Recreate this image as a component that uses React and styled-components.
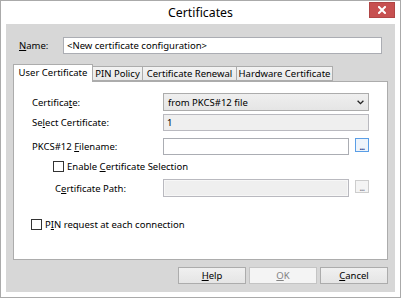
import React from 'react';
import styled, { createGlobalStyle } from 'styled-components';

const Global = createGlobalStyle`
  html, body { margin: 0; padding: 0; background: #fff; }
  body {
    font-family: "Noto Sans", "Segoe UI", sans-serif;
    font-size: 9.5px;
    color: #000;
  }
  * { box-sizing: border-box; }
`;

const Window = styled.div`
  width: 401px;
  height: 298px;
  border: 1px solid #aaaaaa;
  background: #fff;
  display: flex;
  flex-direction: column;
`;

const TitleBar = styled.div`
  height: 23px;
  display: grid;
  grid-template-columns: 1fr auto 1fr;
`;

const Title = styled.div`
  grid-column: 2;
  font-size: 12.3px;
  line-height: 23px;
  color: #000;
`;

const CloseButton = styled.div`
  grid-column: 3;
  justify-self: end;
  margin: 1px 5px 0 0;
  width: 26px;
  height: 16px;
  background: #c75050;
  border: 1px solid #b04545;
  display: flex;
  align-items: center;
  justify-content: center;
`;

const Client = styled.div`
  flex: 1;
  margin: 0 5px 5px 5px;
  background: #d7d7d7;
  padding: 13px 7px 8px 7px;
  display: flex;
  flex-direction: column;
`;

const NameRow = styled.div`
  display: flex;
  align-items: center;
  height: 17px;
  padding: 0 6px;
`;

const NameLabel = styled.div`
  width: 44px;
`;

const TextBox = styled.div`
  flex: ${p => (p.$grow ? 1 : 'none')};
  width: ${p => (p.$w ? `${p.$w}px` : 'auto')};
  height: ${p => p.$h || 17}px;
  border: 1px solid ${p => (p.$disabled ? '#b9b9bf' : '#abadb3')};
  background: ${p => (p.$disabled ? '#efefef' : '#fff')};
  box-shadow: ${p => (p.$inset ? 'inset 0 0 0 1px #f7f7f7' : 'none')};
  padding: 0 3px;
  display: flex;
  align-items: center;
  white-space: nowrap;
`;

const TabStrip = styled.div`
  margin-top: 10px;
  height: 17px;
  display: flex;
  align-items: flex-end;
  position: relative;
  z-index: 1;
`;

const Tab = styled.div`
  width: ${p => p.$w}px;
  height: ${p => (p.$active ? 18 : 15)}px;
  margin-bottom: ${p => (p.$active ? -1 : 0)}px;
  border: 1px solid #acacac;
  border-bottom: ${p => (p.$active ? 'none' : '1px solid #acacac')};
  margin-left: ${p => (p.$first ? 0 : -1)}px;
  background: ${p => (p.$active ? '#fff' : 'linear-gradient(#f3f3f3, #e8e8e8)')};
  display: flex;
  align-items: ${p => (p.$active ? 'flex-start' : 'center')};
  padding-top: ${p => (p.$active ? 1 : 0)}px;
  justify-content: center;
  white-space: nowrap;
`;

const Panel = styled.div`
  height: 179px;
  border: 1px solid #acacac;
  background: #fff;
  padding: 11px 17px 0 17px;
  display: flex;
  flex-direction: column;
`;

const FormRow = styled.div`
  display: grid;
  grid-template-columns: ${p => 132 - (p.$indent || 0)}px 206px;
  padding-left: ${p => p.$indent || 0}px;
  margin-top: ${p => p.$mt || 0}px;
  height: ${p => p.$h || 17}px;
  align-items: center;
`;

const FieldLabel = styled.div`
  padding-left: 1px;
  white-space: nowrap;
`;

const Combo = styled.div`
  height: 18px;
  border: 1px solid #acacac;
  background: linear-gradient(#efefef, #e5e5e5);
  display: flex;
  align-items: center;
  justify-content: space-between;
  padding: 0 4px 0 4px;
`;

const FieldGroup = styled.div`
  display: flex;
  align-items: flex-start;
  gap: 6px;
  height: 100%;
`;

const Browse = styled.div`
  width: 14px;
  height: ${p => (p.$disabled ? 13 : 14)}px;
  margin-top: ${p => (p.$disabled ? 1 : 0)}px;
  border: 1px solid ${p => (p.$disabled ? '#cdcdcd' : '#5a9ee6')};
  background: ${p => (p.$disabled ? '#f4f4f4' : '#eef4fb')};
  color: ${p => (p.$disabled ? '#8a8a9a' : '#1a3a8a')};
  display: flex;
  justify-content: center;
  align-items: flex-end;
  font-size: 8px;
  line-height: 8px;
  font-weight: bold;
  letter-spacing: -0.5px;
`;

const CheckRow = styled.div`
  display: flex;
  align-items: center;
  gap: 3px;
  margin-top: ${p => p.$mt || 0}px;
  padding-left: ${p => p.$indent || 0}px;
  height: 11px;
  white-space: nowrap;
`;

const Box = styled.div`
  width: 11px;
  height: 11px;
  border: 1px solid #333;
  background: #fff;
  flex: none;
`;

const ButtonRow = styled.div`
  margin-top: 7px;
  display: flex;
  justify-content: flex-end;
  gap: 3px;
`;

const Button = styled.div`
  width: 68px;
  height: 17px;
  border: 1px solid ${p => (p.$disabled ? '#c4c4c4' : '#acacac')};
  background: ${p => (p.$disabled ? '#f4f4f4' : 'linear-gradient(#f0f0f0, #e5e5e5)')};
  color: ${p => (p.$disabled ? '#838383' : '#000')};
  display: flex;
  align-items: center;
  justify-content: center;
`;

const Chevron = () => (
  <svg width="7" height="5" viewBox="0 0 7 5">
    <polyline points="0.6,0.8 3.5,3.7 6.4,0.8" fill="none" stroke="#222" strokeWidth="1.3" />
  </svg>
);

const CloseIcon = () => (
  <svg width="8" height="8" viewBox="0 0 8 8">
    <path d="M1 1 L7 7 M7 1 L1 7" stroke="#fff" strokeWidth="2" strokeLinecap="square" />
  </svg>
);

export default function App() {
  return (
    <>
      <Global />
      <Window>
        <TitleBar>
          <Title>Certificates</Title>
          <CloseButton><CloseIcon /></CloseButton>
        </TitleBar>
        <Client>
          <NameRow>
            <NameLabel><u>N</u>ame:</NameLabel>
            <TextBox $grow>&lt;New certificate configuration&gt;</TextBox>
          </NameRow>
          <TabStrip>
            <Tab $active $first $w={80}>User Certificate</Tab>
            <Tab $w={51}>PIN Policy</Tab>
            <Tab $w={95}>Certificate Renewal</Tab>
            <Tab $w={97}>Hardware Certificate</Tab>
          </TabStrip>
          <Panel>
            <FormRow $h={18}>
              <FieldLabel>Certifica<u>t</u>e:</FieldLabel>
              <Combo>
                <span>from PKCS#12 file</span>
                <Chevron />
              </Combo>
            </FormRow>
            <FormRow $mt={3}>
              <FieldLabel>Se<u>l</u>ect Certificate:</FieldLabel>
              <TextBox $disabled>1</TextBox>
            </FormRow>
            <FormRow $mt={7}>
              <FieldLabel>PKCS#12 <u>F</u>ilename:</FieldLabel>
              <FieldGroup>
                <TextBox $w={186} $h={17} />
                <Browse>...</Browse>
              </FieldGroup>
            </FormRow>
            <CheckRow $mt={6} $indent={22}>
              <Box />
              <span>Enable <u>C</u>ertificate Selection</span>
            </CheckRow>
            <FormRow $mt={7} $h={18} $indent={23}>
              <FieldLabel>C<u>e</u>rtificate Path:</FieldLabel>
              <FieldGroup>
                <TextBox $w={186} $h={18} $disabled $inset />
                <Browse $disabled>...</Browse>
              </FieldGroup>
            </FormRow>
            <CheckRow $mt={22}>
              <Box />
              <span>P<u>I</u>N request at each connection</span>
            </CheckRow>
          </Panel>
          <ButtonRow>
            <Button><span><u>H</u>elp</span></Button>
            <Button $disabled><span><u>O</u>K</span></Button>
            <Button><span><u>C</u>ancel</span></Button>
          </ButtonRow>
        </Client>
      </Window>
    </>
  );
}
